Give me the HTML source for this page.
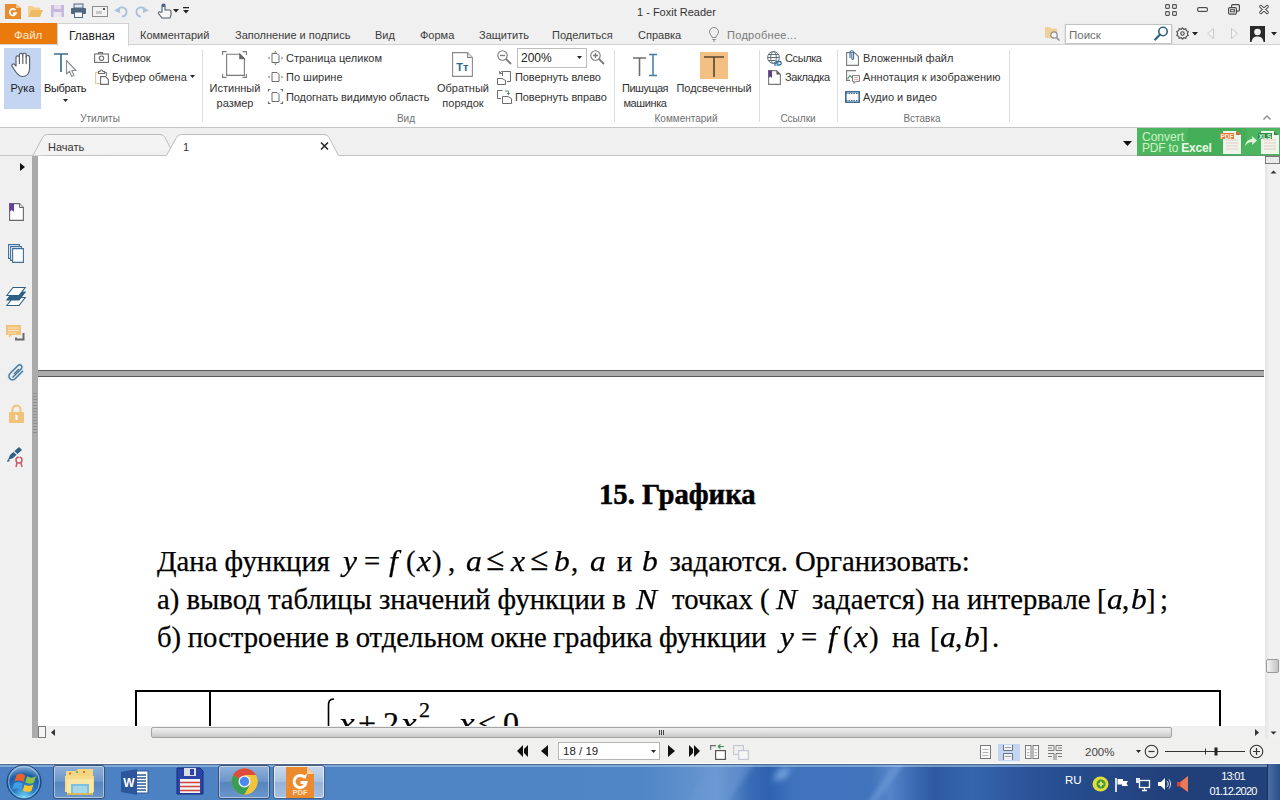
<!DOCTYPE html>
<html lang="ru"><head><meta charset="utf-8"><title>1 - Foxit Reader</title>
<style>
*{box-sizing:border-box;margin:0;padding:0}
html,body{width:1280px;height:800px;overflow:hidden;background:#fff}
body{font-family:"Liberation Sans","DejaVu Sans",sans-serif;font-size:11px;color:#333;position:relative}
.abs{position:absolute}
.t{position:absolute;white-space:nowrap;line-height:14px;height:14px}
.c{text-align:center}
svg{position:absolute;overflow:visible}
#titlebar{left:0;top:0;width:1280px;height:45px;background:#f0f0f0}
#ribbon{left:0;top:44px;width:1280px;height:84px;background:#fff;border-top:1px solid #d2d2d2;border-bottom:1px solid #c6c6c6}
.sep{position:absolute;top:5px;width:1px;height:72px;background:#dcdcdc}
.grp{color:#707070;font-size:10px}
#tabstrip{left:0;top:128px;width:1280px;height:29px;background:#f0f0f0}
#nav{left:0;top:157px;width:32px;height:581px;background:#f0f0f0}
#navsep{left:32px;top:157px;width:6px;height:581px;background:#ababab}
#doc{left:38px;top:157px;width:1226px;height:570px;background:#fff;overflow:hidden}
#vscroll{left:1264px;top:157px;width:16px;height:570px;background:#f0f0f0}
#hscroll{left:38px;top:726px;width:1242px;height:12px;background:#f0f0f0}
#status{left:0;top:738px;width:1280px;height:24px;background:#f0f0f0}
#taskbar{left:0;top:762px;width:1280px;height:38px;background:#2d63a8}
.doc{font-family:"Liberation Serif","DejaVu Serif",serif;color:#000}
.d{position:absolute;white-space:nowrap;font-size:28.700px;line-height:40px;height:40px;-webkit-text-stroke:.250px #000}
.i{font-style:italic;transform:scaleX(1.1);transform-origin:0 50%}
.le{font-size:33px;margin-top:-1.500px}
.l1{top:383.500px}.l2{top:421.500px}.l3{top:459.500px}
</style></head><body>
<div id="titlebar" class="abs">
<!-- quick access -->
<svg style="left:5px;top:4px" width="16" height="15" viewBox="0 0 16 15"><path d="M0 0H11L16 4V15H0Z" fill="#e98a2c"/><path d="M11 0V4H16Z" fill="#f6c58e"/><path d="M10.5 6.2A3.2 3.2 0 1 0 11 9.2H8" fill="none" stroke="#fff" stroke-width="1.8"/></svg>
<svg style="left:28px;top:5px" width="15" height="12" viewBox="0 0 15 12"><path d="M0 1H5L6 2.5H12V5H3L0 11Z" fill="#f3d08e"/><path d="M3 5H15L12 12H0Z" fill="#eeba63"/></svg>
<svg style="left:51px;top:5px" width="13" height="12" viewBox="0 0 13 12"><path d="M0 0H13V12H0Z" fill="#c9b8dd"/><rect x="3" y="0" width="7" height="4" fill="#e6dcef"/><rect x="2.5" y="7" width="8" height="5" fill="#ece5f3"/></svg>
<svg style="left:71px;top:4px" width="15" height="14" viewBox="0 0 15 14"><rect x="3" y="0" width="9" height="4" fill="#dfe6ee" stroke="#50677f"/><rect x="0" y="4" width="15" height="6" rx="1" fill="#50677f"/><rect x="3.5" y="8" width="8" height="5.5" fill="#f4f6f8" stroke="#50677f"/></svg>
<svg style="left:92px;top:6px" width="16" height="11" viewBox="0 0 16 11"><rect x=".5" y=".5" width="15" height="10" fill="#f3f3f3" stroke="#8d8d8d"/><rect x="4" y="5" width="6" height="3" fill="#c8c8c8"/><rect x="11" y="2" width="2" height="2" fill="#555"/></svg>
<svg style="left:114px;top:5px" width="14" height="12" viewBox="0 0 14 12"><path d="M4 5A4.5 4.5 0 1 1 8 11.5" fill="none" stroke="#a9c1dc" stroke-width="1.8"/><path d="M0 5.5L6 2V8Z" fill="#a9c1dc"/></svg>
<svg style="left:135px;top:5px" width="14" height="12" viewBox="0 0 14 12"><path d="M10 5A4.5 4.5 0 1 0 6 11.5" fill="none" stroke="#a9c1dc" stroke-width="1.8"/><path d="M14 5.5L8 2V8Z" fill="#a9c1dc"/></svg>
<svg style="left:157px;top:3px" width="15" height="16" viewBox="0 0 15 16"><path d="M5 9V2.5A1.5 1.5 0 0 1 8 2.5V7H12.5A1.5 1.5 0 0 1 14 8.5V12L13 15H5L1.5 10.5A1.2 1.2 0 0 1 3.5 9.2Z" fill="#f7f7f7" stroke="#4f5d6b" stroke-width="1.1"/><circle cx="6.5" cy="2.5" r="1.6" fill="#39618e"/></svg>
<svg style="left:173px;top:9px" width="6" height="4" viewBox="0 0 6 4"><path d="M0 0H6L3 3.5Z" fill="#222"/></svg>
<svg style="left:183px;top:7px" width="6" height="8" viewBox="0 0 6 8"><rect x="0" y="0" width="6" height="1.3" fill="#222"/><path d="M0 3H6L3 6.5Z" fill="#222"/></svg>
<div class="t" style="left:637px;top:5px;font-size:11px;color:#333">1 - Foxit Reader</div>
<!-- window controls -->
<svg style="left:1165px;top:3.500px" width="12" height="12" viewBox="0 0 12 12" fill="none" stroke="#555" stroke-width="1.100"><rect x=".600" y=".600" width="3.800" height="3.800" rx=".800"/><rect x="7.600" y=".600" width="3.800" height="3.800" rx=".800"/><rect x=".600" y="7.600" width="3.800" height="3.800" rx=".800"/><rect x="7.600" y="7.600" width="3.800" height="3.800" rx=".800"/></svg>
<svg style="left:1197px;top:7px" width="11" height="5" viewBox="0 0 11 5"><rect x=".6" y=".6" width="9.8" height="3.8" rx="1.5" fill="#fff" stroke="#4a4a4a" stroke-width="1.2"/></svg>
<svg style="left:1228px;top:4px" width="12" height="11" viewBox="0 0 12 11" fill="#efefef" stroke="#4a4a4a" stroke-width="1.2"><rect x="3.6" y=".6" width="7.8" height="6.5" rx="1.2"/><rect x=".6" y="3.6" width="7.8" height="6.5" rx="1.2"/><rect x="2.6" y="5.6" width="3.8" height="2.2" stroke-width="1"/></svg>
<svg style="left:1259px;top:5px" width="10" height="9" viewBox="0 0 10 9" fill="none" stroke-linecap="round"><path d="M1.800 1.500L8.200 7.500M8.200 1.500L1.800 7.500" stroke="#4a4a4a" stroke-width="3.200"/><path d="M1.800 1.500L8.200 7.500M8.200 1.500L1.800 7.500" stroke="#fff" stroke-width="1.200"/></svg>
<!-- menu tabs -->
<div class="abs" style="left:0;top:23px;width:57px;height:21px;background:#ea7a0c"></div>
<div class="t" style="left:14px;top:28px;color:#fbe3c4;font-size:11.5px;text-shadow:0 0 1px #fff3">Файл</div>
<div class="abs" style="left:57px;top:23px;width:72px;height:23px;background:#fff;border:1px solid #d2d2d2;border-bottom:none;z-index:3"></div>
<div class="t" style="left:69px;top:29px;font-size:12px;color:#222;z-index:4">Главная</div>
<div class="t" style="left:140px;top:28px;color:#3c3c3c">Комментарий</div>
<div class="t" style="left:235px;top:28px;color:#3c3c3c">Заполнение и подпись</div>
<div class="t" style="left:375px;top:28px;color:#3c3c3c">Вид</div>
<div class="t" style="left:420px;top:28px;color:#3c3c3c">Форма</div>
<div class="t" style="left:479px;top:28px;color:#3c3c3c">Защитить</div>
<div class="t" style="left:552px;top:28px;color:#3c3c3c">Поделиться</div>
<div class="t" style="left:638px;top:28px;color:#3c3c3c">Справка</div>
<svg style="left:708px;top:27px" width="12" height="15" viewBox="0 0 12 15" fill="none" stroke="#8a8a8a" stroke-width="1"><path d="M4 10.5C4 8.5 1.5 7.5 1.5 5A4.5 4.5 0 0 1 10.500 5C10.500 7.5 8 8.500 8 10.500Z"/><path d="M4.300 12.500H7.700M5 14H7"/></svg>
<div class="t" style="left:727px;top:28px;letter-spacing:.300px;color:#7a7a7a">Подробнее...</div>
<!-- search area -->
<svg style="left:1045px;top:26px" width="16" height="15" viewBox="0 0 16 15"><path d="M0 1H5L6 2.500H12V12H0Z" fill="#f1cf9b"/><circle cx="9" cy="9" r="3.200" fill="#f4f4f4" stroke="#8a8a8a" stroke-width="1.200"/><path d="M11.500 11.500L14.500 14.500" stroke="#8a8a8a" stroke-width="1.500"/></svg>
<div class="abs" style="left:1065px;top:24px;width:107px;height:20px;background:#fff;border:1px solid #c4c4c4;box-shadow:0 1px 2px #ccc"></div>
<div class="t" style="left:1069px;top:28px;color:#6e6e6e;font-size:11.500px">Поиск</div>
<svg style="left:1154px;top:26px" width="15" height="15" viewBox="0 0 15 15" fill="none"><circle cx="9" cy="5.500" r="4.200" stroke="#2f6383" stroke-width="1.600"/><path d="M6 8.500L1.200 13.500" stroke="#2f6383" stroke-width="2.200" stroke-linecap="round"/></svg>
<svg style="left:1176px;top:27px" width="13" height="13" viewBox="0 0 13 13" fill="none" stroke="#4a4a4a" stroke-width="1.100"><circle cx="6.500" cy="6.500" r="1.700"/><path d="M6.500 .800L7.800 2.300L9.800 1.700L10.300 3.700L12.200 4.500L11.300 6.500L12.200 8.500L10.300 9.300L9.800 11.300L7.800 10.700L6.500 12.200L5.200 10.700L3.200 11.300L2.700 9.300L.800 8.500L1.700 6.500L.800 4.500L2.700 3.700L3.200 1.700L5.200 2.300Z"/></svg>
<svg style="left:1192px;top:32px" width="6" height="4" viewBox="0 0 6 4"><path d="M0 0H6L3 3.500Z" fill="#222"/></svg>
<svg style="left:1207px;top:28px" width="7" height="11" viewBox="0 0 7 11"><path d="M6.500 .500V10.500L.700 5.500Z" fill="#f4f4f4" stroke="#c9c9c9"/></svg>
<svg style="left:1231px;top:28px" width="7" height="11" viewBox="0 0 7 11"><path d="M.500 .500V10.500L6.300 5.500Z" fill="#f4f4f4" stroke="#c9c9c9"/></svg>
<svg style="left:1250px;top:26px" width="15" height="16" viewBox="0 0 15 16"><rect width="15" height="16" fill="#2a2a2a"/><circle cx="7.500" cy="6" r="3.300" fill="#f2f2f2"/><path d="M1.500 16C2 11.500 5 10.500 7.500 10.500S13 11.500 13.500 16Z" fill="#f2f2f2"/></svg>
<svg style="left:1271px;top:32px" width="6" height="4" viewBox="0 0 6 4"><path d="M0 0H6L3 3.500Z" fill="#222"/></svg>
</div>
<div id="ribbon" class="abs"></div>
<div id="rc" class="abs" style="left:0;top:0;width:1280px;height:128px">
<div class="abs" style="left:4px;top:48px;width:37px;height:61px;background:#c3d5f1"></div>
<!-- hand -->
<svg style="left:11px;top:52px" width="22" height="26" viewBox="0 0 22 26" fill="#fff" stroke="#5a6470" stroke-width="1.2" stroke-linejoin="round"><path d="M5 14V5.500A1.700 1.700 0 0 1 8.400 5.500V3A1.700 1.700 0 0 1 11.800 3V2.700A1.700 1.700 0 0 1 15.200 3.200V5A1.700 1.700 0 0 1 18.600 5.500V16C18.600 21 16 24.500 11.500 24.500C8 24.500 6.500 22.500 4.500 19.500L1 14.200A1.600 1.600 0 0 1 3.600 12.400Z"/><path d="M8.400 5.500V12M11.800 3V12M15.200 4V12" fill="none"/></svg>
<div class="t c" style="left:4px;top:81px;width:37px;color:#222">Рука</div>
<!-- select -->
<svg style="left:54px;top:53px" width="23" height="25" viewBox="0 0 23 25"><path d="M0 1H14M7 1V19" fill="none" stroke="#3d6f8f" stroke-width="1.700"/><path d="M12.500 7.500V21L15.500 18.200L17.700 23.500L20 22.500L17.800 17.500H22Z" fill="#fbfbfb" stroke="#8a8f96" stroke-width="1.100" stroke-linejoin="round"/></svg>
<div class="t c" style="left:41px;top:81px;width:48px;color:#222;letter-spacing:-.300px">Выбрать</div>
<svg style="left:63px;top:98.500px" width="5" height="3" viewBox="0 0 5 3"><path d="M0 0H5L2.500 3Z" fill="#222"/></svg>
<!-- snapshot -->
<svg style="left:94px;top:52px" width="15" height="11" viewBox="0 0 15 11" fill="none" stroke="#6d6d6d" stroke-width="1.100"><path d="M4.500 2V.600H8.500V2"/><rect x=".600" y="2" width="13.800" height="8.400"/><circle cx="7.500" cy="6.200" r="2.200"/></svg>
<div class="t" style="left:112px;top:51px">Снимок</div>
<!-- clipboard -->
<svg style="left:95px;top:70px" width="14" height="15" viewBox="0 0 14 15" fill="none"><path d="M3.500 2.500H.600V13.500H5" stroke="#e8c79a" stroke-width="1.200"/><path d="M9.500 2.500H11.400V6" stroke="#8a8a8a" stroke-width="1.200"/><path d="M3.500 3.500V1.500H5A1.500 1.500 0 0 1 8 1.500H9.500V3.500Z" stroke="#6d6d6d" stroke-width="1.100"/><path d="M5.600 6.600H10.500L13.400 9.500V14.400H5.600Z" fill="#fff" stroke="#6d6d6d" stroke-width="1.100"/></svg>
<div class="t" style="left:112px;top:70px">Буфер обмена</div>
<svg style="left:190px;top:75px" width="5" height="3" viewBox="0 0 5 3"><path d="M0 0H5L2.500 3Z" fill="#222"/></svg>
<div class="t c grp" style="left:60px;top:112px;width:80px">Утилиты</div>
<div class="sep" style="left:202px;top:50px"></div>
<!-- actual size -->
<svg style="left:222px;top:51px" width="25" height="27" viewBox="0 0 25 27" fill="none" stroke="#7a7a7a" stroke-width="1.100"><path d="M.600 4V.600H4.500M20.500 .600H24.400V4M24.400 23V26.400H20.500M4.500 26.400H.600V23"/><path d="M4.600 3.200H17.800L22.400 7.800V24.400H4.600Z" fill="#fff"/><path d="M17.800 3.200V7.800H22.400Z" fill="#666" stroke="#666"/></svg>
<div class="t c" style="left:205px;top:81px;width:60px">Истинный</div>
<div class="t c" style="left:205px;top:96px;width:60px">размер</div>
<!-- fit page -->
<svg style="left:268px;top:51px" width="15" height="14" viewBox="0 0 15 14" fill="none" stroke="#6d6d6d"><path d="M4 2.500H9L11 4.500V11.500H4Z" fill="#fff"/><path d="M7.500 0L6 1.500H9ZM7.500 14L6 12.500H9ZM0 7L1.500 5.500V8.500ZM15 7L13.500 5.500V8.500Z" fill="#6d6d6d" stroke="none"/></svg>
<div class="t" style="left:286px;top:51px">Страница целиком</div>
<!-- fit width -->
<svg style="left:268px;top:70px" width="15" height="14" viewBox="0 0 15 14" fill="none" stroke="#6d6d6d"><path d="M4 2.500H9L11 4.500V11.500H4Z" fill="#fff"/><path d="M0 7L1.500 5.500V8.500ZM15 7L13.500 5.500V8.500Z" fill="#6d6d6d" stroke="none"/></svg>
<div class="t" style="left:286px;top:70px">По ширине</div>
<!-- fit visible -->
<svg style="left:268px;top:89px" width="15" height="15" viewBox="0 0 15 15" fill="none" stroke="#6d6d6d"><path d="M4 3.500H9L11 5.500V12.500H4Z" fill="#fff"/><path d="M.500 2.500V.500H2.500M12.500 .500H14.500V2.500M14.500 12.500V14.500H12.500M2.500 14.500H.500V12.500" stroke-width="1.200"/></svg>
<div class="t" style="left:286px;top:90px;letter-spacing:-.100px">Подогнать видимую область</div>
<div class="t c grp" style="left:376px;top:112px;width:60px">Вид</div>
<!-- reverse order -->
<svg style="left:452px;top:52px" width="21" height="25" viewBox="0 0 21 25"><path d="M.600 .600H15.500L20.400 5.500V24.400H.600Z" fill="#fff" stroke="#8a8a8a" stroke-width="1.100"/><path d="M15.500 .600V5.500H20.400" fill="#ddd" stroke="#8a8a8a" stroke-width="1.100"/><text x="10.300" y="19" text-anchor="middle" font-family="Liberation Sans, sans-serif" font-size="11" font-weight="bold" fill="#2e6a8e">Tт</text></svg>
<div class="t c" style="left:433px;top:81px;width:60px">Обратный</div>
<div class="t c" style="left:433px;top:96px;width:60px">порядок</div>
<!-- zoom out -->
<svg style="left:497px;top:50px" width="15" height="15" viewBox="0 0 15 15" fill="none" stroke="#7a7a7a"><circle cx="5.500" cy="5.500" r="4.700" stroke-width="1.100"/><path d="M3 5.500H8" stroke-width="1.300"/><path d="M9 9L14 14" stroke-width="1.800"/></svg>
<div class="abs" style="left:517px;top:48px;width:70px;height:20px;background:#fff;border:1px solid #bdbdbd"></div>
<div class="t" style="left:521px;top:51px;font-size:12px;color:#222">200%</div>
<svg style="left:577px;top:56px" width="5" height="3" viewBox="0 0 5 3"><path d="M0 0H5L2.500 3Z" fill="#222"/></svg>
<!-- zoom in -->
<svg style="left:590px;top:50px" width="15" height="15" viewBox="0 0 15 15" fill="none" stroke="#7a7a7a"><circle cx="5.500" cy="5.500" r="4.700" stroke-width="1.100"/><path d="M3 5.500H8M5.500 3V8" stroke-width="1.300"/><path d="M9 9L14 14" stroke-width="1.800"/></svg>
<!-- rotate left -->
<svg style="left:497px;top:70px" width="15" height="15" viewBox="0 0 15 15" fill="none" stroke="#6d6d6d"><path d="M5.500 6V1.500H13.500V11.500H10"/><path d="M.500 8.500H5L8.500 10.500V14.500H.500Z" fill="#fff"/><path d="M5 1L2.500 3.500M2.500 3.500V1M2.500 3.500H5" stroke-width=".900"/></svg>
<div class="t" style="left:515px;top:70px;letter-spacing:-.100px">Повернуть влево</div>
<!-- rotate right -->
<svg style="left:497px;top:89px" width="15" height="15" viewBox="0 0 15 15" fill="none" stroke="#6d6d6d"><path d="M5.500 1.500H.500V9.500H4"/><path d="M5.500 7.500H11L14.500 9.500V14.500H5.500Z" fill="#fff"/><path d="M8 2H11.500V5.500M11.500 5.500L10 4M11.500 5.500L13 4" stroke="#3f8a5a" stroke-width=".900"/></svg>
<div class="t" style="left:515px;top:90px;letter-spacing:-.100px">Повернуть вправо</div>
<div class="sep" style="left:614px;top:50px"></div>
<!-- typewriter -->
<svg style="left:633px;top:53px" width="25" height="24" viewBox="0 0 25 24" fill="none"><path d="M0 5H13M6.500 5V23" stroke="#6d6d6d" stroke-width="1.600"/><path d="M16 1.500H24M20 1.500V22.500M16 22.500H24" stroke="#3d7ba6" stroke-width="1.500"/></svg>
<div class="t c" style="left:615px;top:81px;width:60px;letter-spacing:-.500px">Пишущая</div>
<div class="t c" style="left:615px;top:96px;width:60px;letter-spacing:-.400px">машинка</div>
<!-- highlight -->
<div class="abs" style="left:700px;top:52px;width:28px;height:27px;background:#f3c083"></div>
<svg style="left:704px;top:56px" width="20" height="21" viewBox="0 0 20 21" fill="none"><path d="M0 1H20M10 1V21" stroke="#5a4632" stroke-width="1.600"/></svg>
<div class="t c" style="left:673px;top:81px;width:82px">Подсвеченный</div>
<div class="t c grp" style="left:646px;top:112px;width:80px">Комментарий</div>
<div class="sep" style="left:759px;top:50px"></div>
<!-- link -->
<svg style="left:767px;top:51px" width="15" height="15" viewBox="0 0 15 15" fill="none" stroke="#5d6b7a"><circle cx="6.500" cy="6.500" r="5.900" /><ellipse cx="6.500" cy="6.500" rx="2.800" ry="5.900"/><path d="M.600 6.500H12.400M1.500 3.500H11.500M1.500 9.500H8"/><path d="M9 10.500H12.500A1.700 1.700 0 0 1 12.500 14H9.500M11.500 12.200H8.500A1.700 1.700 0 0 0 8.500 14.800" stroke="#2f6fa3" stroke-width="1.300"/></svg>
<div class="t" style="left:785px;top:51px;letter-spacing:-.400px">Ссылка</div>
<!-- bookmark -->
<svg style="left:768px;top:70px" width="13" height="15" viewBox="0 0 13 15"><path d="M.600 .600H8.500L12.400 4.500V14.400H.600Z" fill="#fff" stroke="#7a7a7a" stroke-width="1.100"/><path d="M8.500 .600V4.500H12.400Z" fill="#555"/><path d="M.500 .500H4V8L2.200 6.500L.500 8Z" fill="#5b3d86"/></svg>
<div class="t" style="left:785px;top:70px;letter-spacing:-.400px">Закладка</div>
<div class="t c grp" style="left:768px;top:112px;width:60px">Ссылки</div>
<div class="sep" style="left:837px;top:50px"></div>
<!-- attach -->
<svg style="left:846px;top:50px" width="13" height="16" viewBox="0 0 13 16" fill="none"><path d="M.600 2.600H8.500L12.400 6.500V15.400H.600Z" fill="#fff" stroke="#7a7a7a" stroke-width="1.100"/><path d="M4 8V2.500A1.800 1.800 0 0 1 7.600 2.500V8.500A.900 .900 0 0 1 5.800 8.500V3.500" stroke="#3d6f9a" stroke-width="1.100"/></svg>
<div class="t" style="left:863px;top:51px">Вложенный файл</div>
<!-- image annot -->
<svg style="left:846px;top:70px" width="14" height="15" viewBox="0 0 14 15" fill="none"><path d="M10 .600H.600V10.400H4" stroke="#7a7a7a" stroke-width="1.100"/><path d="M1.500 9L4 5.500L6 8" stroke="#4f9a67" stroke-width="1.200"/><path d="M6.500 5.600H13.400V11.400H9.500L8 13.500V11.400H6.500Z" fill="#fff" stroke="#7a7a7a" stroke-width="1"/><path d="M8 7.500H12M8 9.500H12" stroke="#d59a9a" stroke-width=".800"/></svg>
<div class="t" style="left:863px;top:70px;letter-spacing:.100px">Аннотация к изображению</div>
<!-- audio video -->
<svg style="left:845px;top:91px" width="15" height="12" viewBox="0 0 15 12"><rect x=".800" y=".800" width="13.400" height="10.400" fill="#fff" stroke="#3f6d95" stroke-width="1.600"/><path d="M1 2.500H14M1 9.500H14" stroke="#3f6d95" stroke-width="1" stroke-dasharray="1.500 1"/></svg>
<div class="t" style="left:863px;top:90px">Аудио и видео</div>
<div class="t c grp" style="left:892px;top:112px;width:60px">Вставка</div>
<div class="sep" style="left:1009px;top:50px"></div>
<svg style="left:1263px;top:115px" width="8" height="5" viewBox="0 0 8 5"><path d="M.500 4.500L4 1L7.500 4.500" fill="none" stroke="#8a8a8a" stroke-width="1.300"/></svg>
</div>
<div id="tabstrip" class="abs"></div>
<svg style="left:0;top:128px" width="1280" height="29" viewBox="0 0 1280 29">
<path d="M0 27.500H1280" stroke="#c3c3c3" stroke-width="1"/>
<path d="M33 27.500L42.500 9.500Q44 6.500 47.500 6.500H160Q163.500 6.500 165 9.500L172 23" fill="#f3f3f3" stroke="#bdbdbd" stroke-width="1"/>
<path d="M166.500 27.500L176.500 9.500Q178 6.500 181.500 6.500H324Q327.500 6.500 329 9.500L338.500 27.500V29H166.500Z" fill="#fff" stroke="none"/>
<path d="M166.500 27.500L176.500 9.500Q178 6.500 181.500 6.500H324Q327.500 6.500 329 9.500L338.500 27.500" fill="none" stroke="#bdbdbd" stroke-width="1"/>
<path d="M321 14.500L328 21.500M328 14.500L321 21.500" stroke="#222" stroke-width="1.500"/>
<path d="M1123 13H1132L1127.500 18Z" fill="#111"/>
</svg>
<div class="t" style="left:48px;top:140px;font-size:11px;color:#333">Начать</div>
<div class="t" style="left:183px;top:140px;font-size:11px;color:#333">1</div>
<!-- banner -->
<div class="abs" style="left:1137px;top:128px;width:143px;height:28px;background:#4db560;overflow:hidden;border-bottom:1px solid #5f9a6b">
<div class="abs" style="left:50px;top:-18px;width:60px;height:50px;border-radius:50%;background:#45ae59"></div>
<div class="t" style="left:5px;top:3px;font-size:12px;line-height:12px;color:#c9f5c4">Convert</div>
<div class="t" style="left:5px;top:14px;font-size:12px;line-height:12px;color:#c9f5c4;letter-spacing:-.2px">PDF to <b style="color:#eafce8">Excel</b></div>
<svg style="left:82px;top:1px" width="61" height="27" viewBox="0 0 61 27">
<path d="M4 2H17L22 6V25H4Z" fill="#eef5ea"/><path d="M17 2V6H22Z" fill="#d9623a"/>
<path d="M7 11H19M7 14H19M7 17H19M7 20H19" stroke="#e9c9c9" stroke-width="1"/>
<rect x="1" y="4" width="14" height="6" fill="#e07b3e"/>
<text x="8" y="9.500" text-anchor="middle" font-family="Liberation Sans, sans-serif" font-size="6.500" font-weight="bold" fill="#fbe9dd">PDF</text>
<path d="M26 17C27 12 30 10 33 10V7L38 11.500L33 16V13C30 13 28 14.500 26 17Z" fill="#d8f3d6"/>
<path d="M42 2H55L60 6V25H42Z" fill="#eef5ea"/><path d="M55 2V6H60Z" fill="#2f8a48"/>
<path d="M45 11H57M45 14H57M45 17H57M45 20H57" stroke="#e9c9c9" stroke-width="1"/>
<rect x="39" y="4" width="14" height="6" fill="#2f8a48"/>
<text x="46" y="9.500" text-anchor="middle" font-family="Liberation Sans, sans-serif" font-size="6.500" font-weight="bold" fill="#d6f3d6">XLS</text>
</svg>
</div>
<div id="nav" class="abs"></div>
<div id="navsep" class="abs" style="top:156px;height:582px"></div>
<svg style="left:0;top:157px" width="32" height="330" viewBox="0 0 32 330">
<path d="M20 6V14L25 10Z" fill="#111"/>
<!-- bookmark page -->
<g transform="translate(9,46)"><path d="M.600 .600H10.500L14.400 4.500V17.400H.600Z" fill="#fff" stroke="#6a6a6a" stroke-width="1.100"/><path d="M10.500 .600V4.500H14.400" fill="#ddd" stroke="#6a6a6a" stroke-width="1"/><path d="M.500 .500H5V9L2.800 7L.500 9Z" fill="#6a3f9a"/></g>
<!-- pages -->
<g transform="translate(8,87)" fill="#fff" stroke="#3d6f9a" stroke-width="1.100"><path d="M.600 .600H11.400V14.400H.600Z"/><path d="M2.600 2.600H13.400V16.400H2.600Z"/><path d="M4.600 4.600H15.400V18.400H4.600Z"/></g>
<!-- layers -->
<g transform="translate(6,128)" stroke="#2f5f86" stroke-width="1.100"><path d="M.800 20.500L7 12.500H19.200L13 20.500Z" fill="#fff"/><path d="M.800 15L7 7H19.200L13 15Z" fill="#2f5f86"/><path d="M.800 10.500L7 2.500H19.200L13 10.500Z" fill="#fff"/></g>
<!-- comments -->
<g transform="translate(6,168)"><path d="M0 0H15V10H6L3 13V10H0Z" fill="#f0c27a"/><path d="M2 3H13M2 5.500H13M2 8H10" stroke="#fbe6c6" stroke-width="1"/><path d="M17.500 8V14.500H10V12.500" fill="none" stroke="#6a6a6a" stroke-width="2"/></g>
<!-- clip -->
<g transform="translate(8,206)" fill="none" stroke="#4f7596" stroke-width="1.400"><path d="M4.500 14.500L13.500 5.500A2.300 2.300 0 0 0 10.300 2.300L2 10.600A3.600 3.600 0 0 0 7.100 15.700L15 7.800" stroke="#d7eaf7" stroke-width="3.400"/><path d="M4.500 14.500L13.500 5.500A2.300 2.300 0 0 0 10.300 2.300L2 10.600A3.600 3.600 0 0 0 7.100 15.700L15 7.800"/><path d="M6 11L11 6"/></g>
<!-- lock -->
<g transform="translate(9,248)"><path d="M3.500 8V4.500A4 4 0 0 1 11.500 4.500V8" fill="none" stroke="#f0c27a" stroke-width="2"/><rect x="0" y="7" width="15" height="11" rx="1" fill="#f0c27a"/><rect x="6.500" y="10" width="2" height="5" fill="#fff"/></g>
<!-- sign -->
<g transform="translate(7,290)"><path d="M1 13L3 8L12 0L15 3L6 11Z" fill="#2f5f86"/><path d="M0 15L1 12L3 14Z" fill="#2f5f86"/><circle cx="12" cy="13" r="3" fill="none" stroke="#c45a6a" stroke-width="1.500"/><path d="M10 16L9 20M14 16L15 20" stroke="#c45a6a" stroke-width="1.500"/><path d="M4 2L13 10" stroke="#f0f0f0" stroke-width="1.200"/></g>
</svg>
<svg style="left:33px;top:393px" width="4" height="42" viewBox="0 0 4 42"><path d="M0 0.500H4M0 3.500H4M0 6.500H4M0 9.500H4M0 12.500H4M0 15.500H4M0 18.500H4M0 21.500H4M0 24.500H4M0 27.500H4M0 30.500H4M0 33.500H4M0 36.500H4M0 39.500H4" stroke="#8f8f8f" stroke-width="1"/></svg>
<div class="abs" style="left:38px;top:156px;width:1227px;height:1px;background:#fff"></div>
<div id="doc" class="abs doc" style="height:569px;width:1227px">
<div class="abs" style="left:0;top:213px;width:1226px;height:7px;background:#ababab;border-top:1px solid #5a5a5a;border-bottom:1px solid #5a5a5a"></div>
<div class="d" style="left:561px;top:317px;font-weight:bold;-webkit-text-stroke:.500px #000">15. Графика</div>
<div class="d l1" style="left:119px">Дана функция</div>
<div class="d l1 i" style="left:305px">y</div><div class="d l1" style="left:326px">=</div><div class="d l1 i" style="left:351px">f</div><div class="d l1" style="left:368px">(</div><div class="d l1 i" style="left:379px">x</div><div class="d l1" style="left:394px">)</div><div class="d l1" style="left:410px">,</div>
<div class="d l1 i" style="left:428px">a</div><div class="d l1 le" style="left:448px">≤</div><div class="d l1 i" style="left:473px">x</div><div class="d l1 le" style="left:492px">≤</div><div class="d l1 i" style="left:516px">b</div><div class="d l1" style="left:533px">,</div>
<div class="d l1 i" style="left:552px">a</div><div class="d l1" style="left:579px">и</div><div class="d l1 i" style="left:604px">b</div>
<div class="d l1" style="left:631.500px">задаются. Организовать:</div>
<div class="d l2" style="left:119px">а) вывод таблицы значений функции в</div>
<div class="d l2 i" style="left:598px">N</div>
<div class="d l2" style="left:634px">точках (</div>
<div class="d l2 i" style="left:738px">N</div>
<div class="d l2" style="left:774px">задается) на интервале</div>
<div class="d l2" style="left:1059px">[</div><div class="d l2 i" style="left:1069px">a</div><div class="d l2" style="left:1084px">,</div><div class="d l2 i" style="left:1093px">b</div><div class="d l2" style="left:1108px">]</div><div class="d l2" style="left:1122px">;</div>
<div class="d l3" style="left:119px;word-spacing:-.600px">б) построение в отдельном окне графика функции</div>
<div class="d l3 i" style="left:742px">y</div><div class="d l3" style="left:763px">=</div><div class="d l3 i" style="left:790px">f</div><div class="d l3" style="left:805px">(</div><div class="d l3 i" style="left:816px">x</div><div class="d l3" style="left:831px">)</div>
<div class="d l3" style="left:854px">на</div>
<div class="d l3" style="left:892px">[</div><div class="d l3 i" style="left:902px">a</div><div class="d l3" style="left:917px">,</div><div class="d l3 i" style="left:926px">b</div><div class="d l3" style="left:941px">]</div><div class="d l3" style="left:954px">.</div>
<!-- table -->
<div class="abs" style="left:97px;top:533px;width:1086px;height:60px;border:2px solid #000;border-bottom:none"></div>
<div class="abs" style="left:171px;top:533px;width:2px;height:60px;background:#000"></div>
<svg style="left:284px;top:540px" width="16" height="40" viewBox="0 0 16 40"><path d="M12 2C7 2 6.500 5 6.500 9V40" fill="none" stroke="#000" stroke-width="1.600"/></svg>
<div class="d i" style="left:301px;top:546px;font-size:32px">x</div>
<div class="d" style="left:320px;top:546px;font-size:32px">+</div>
<div class="d" style="left:345px;top:546px;font-size:32px">2</div>
<div class="d i" style="left:363px;top:546px;font-size:32px">x</div>
<div class="d" style="left:381px;top:533px;font-size:22px">2</div>
<div class="d" style="left:398px;top:546px;font-size:32px">,</div>
<div class="d i" style="left:421px;top:546px;font-size:32px">x</div>
<div class="d" style="left:440px;top:546px;font-size:32px">&lt;</div>
<div class="d" style="left:465px;top:546px;font-size:32px">0</div>
</div>
<div id="vscroll" class="abs" style="top:156px;height:582px;left:1265px;width:15px;background:linear-gradient(90deg,#e4e4e4,#f1f1f1 30%,#f1f1f1)"></div>
<div class="abs" style="left:1265px;top:156px;width:15px;height:8px;background:#e9e9e9;border:1px solid #7a7a7a"></div>
<svg style="left:1270px;top:170px" width="7" height="4" viewBox="0 0 7 4"><path d="M.500 3.500L3.500 .500L6.500 3.500Z" fill="#333"/></svg>
<svg style="left:1270px;top:731px" width="7" height="4" viewBox="0 0 7 4"><path d="M.500 .500L3.500 3.500L6.500 .500Z" fill="#333"/></svg>
<div class="abs" style="left:1266px;top:659px;width:13px;height:14px;border:1px solid #9a9a9a;border-radius:2px;background:linear-gradient(90deg,#f4f4f4,#d9d9d9 55%,#c4c4c4)"></div>
<div id="hscroll" class="abs" style="left:38px;width:1227px"></div>
<div class="abs" style="left:38px;top:726px;width:8px;height:12px;background:#f4f4f4;border:1px solid #7a7a7a"></div>
<svg style="left:51px;top:729px" width="4" height="7" viewBox="0 0 4 7"><path d="M4 0L0 3.500L4 7Z" fill="#333"/></svg>
<svg style="left:1255px;top:729px" width="4" height="7" viewBox="0 0 4 7"><path d="M0 0L4 3.500L0 7Z" fill="#333"/></svg>
<div class="abs" style="left:151px;top:727px;width:1021px;height:11px;border:1px solid #a5a5a5;border-radius:2px;background:linear-gradient(180deg,#f0f0f0,#dedede 50%,#c6c6c6)"></div>
<svg style="left:659px;top:730px" width="6" height="5" viewBox="0 0 6 5"><path d="M.500 0V5M2.500 0V5M4.500 0V5" stroke="#444" stroke-width="1"/></svg>
<div id="status" class="abs" style="height:25px;background:#f0f0ef"></div>
<div id="sc" class="abs" style="left:0;top:0;width:1280px;height:0">
<svg style="left:517px;top:745px" width="12" height="12" viewBox="0 0 12 12"><path d="M6 0V12L0 6ZM11 0V12L7 8V4Z" fill="#111"/><rect x="7" y="0" width="0" height="12"/></svg>
<svg style="left:541px;top:745px" width="7" height="12" viewBox="0 0 7 12"><path d="M7 0V12L0 6Z" fill="#111"/></svg>
<div class="abs" style="left:558px;top:742px;width:102px;height:18px;background:#fff;border:1px solid #b5b5b5"></div>
<div class="t" style="left:563px;top:744px;font-size:11.5px;color:#222">18 / 19</div>
<svg style="left:651px;top:750px" width="5" height="3" viewBox="0 0 5 3"><path d="M0 0H5L2.500 3Z" fill="#222"/></svg>
<svg style="left:668px;top:745px" width="7" height="12" viewBox="0 0 7 12"><path d="M0 0V12L7 6Z" fill="#111"/></svg>
<svg style="left:688px;top:745px" width="12" height="12" viewBox="0 0 12 12"><path d="M6 0V12L12 6ZM1 0V12L5 8V4Z" fill="#111"/></svg>
<svg style="left:710px;top:744px" width="16" height="16" viewBox="0 0 16 16" fill="none"><path d="M.600 6V1.600H6" stroke="#6d6d6d" stroke-width="1.200"/><path d="M8 2.500H14M8 2.500L10.500 .500M8 2.500L10.500 4.500" stroke="#3f8a5a" stroke-width="1.100"/><rect x="5.600" y="6.600" width="9.800" height="8.800" fill="#fff" stroke="#555" stroke-width="1.200"/></svg>
<svg style="left:733px;top:744px" width="16" height="16" viewBox="0 0 16 16" fill="none" stroke="#c2c9d2" stroke-width="1.200"><rect x=".600" y="1.600" width="9.800" height="8.800"/><rect x="5.600" y="6.600" width="9.800" height="8.800" fill="#f6f6f6"/></svg>
<!-- view modes -->
<svg style="left:980px;top:745px" width="11" height="14" viewBox="0 0 11 14" fill="none" stroke="#7a7a7a"><rect x=".500" y=".500" width="10" height="13" fill="#fafafa"/><path d="M2.500 4.500H8.500M2.500 7.500H8.500M2.500 10.500H8.500" stroke="#b5b5b5"/></svg>
<div class="abs" style="left:998px;top:744px;width:22px;height:17px;background:#c3d5f1"></div>
<svg style="left:1002px;top:745px" width="12" height="15" viewBox="0 0 12 15" fill="none" stroke="#6d7480"><path d="M1.500 0V5.500H10.500V0M1.500 15V8.500H10.500V15" fill="#eef2f8"/><path d="M3 2.500H9M3 11.500H9" stroke="#9aa3b0"/></svg>
<svg style="left:1025px;top:745px" width="14" height="14" viewBox="0 0 14 14" fill="none" stroke="#7a7a7a"><rect x=".500" y=".500" width="5.500" height="13" fill="#fafafa"/><rect x="8" y=".500" width="5.500" height="13" fill="#fafafa"/><path d="M2 4.500H4.500M2 7.500H4.500M2 10.500H4.500M9.500 4.500H12M9.500 7.500H12M9.500 10.500H12" stroke="#b5b5b5"/></svg>
<svg style="left:1048px;top:745px" width="14" height="15" viewBox="0 0 14 15" fill="none" stroke="#7a7a7a"><path d="M0 .500H6V5.500H0M14 .500H8V5.500H14M0 8.500H6V15M14 8.500H8V15M0 3H4M10 3H14M0 11.500H4M10 11.500H14"/></svg>
<div class="t" style="left:1085px;top:745px;font-size:11.500px;color:#444">200%</div>
<svg style="left:1136px;top:750px" width="5" height="3" viewBox="0 0 5 3"><path d="M0 0H5L2.500 3Z" fill="#222"/></svg>
<svg style="left:1144px;top:744px" width="120" height="15" viewBox="0 0 120 15" fill="none" stroke="#333"><circle cx="7.500" cy="7.500" r="6.300" stroke-width="1.100"/><path d="M4.500 7.500H10.500" stroke-width="1.200"/><path d="M21 7.500H101" stroke-width="1"/><path d="M61.500 4.500V10.500" stroke-width="1"/><rect x="70.500" y="3.500" width="3" height="8" fill="#222" stroke="none"/><circle cx="112.500" cy="7.500" r="6.300" stroke-width="1.100"/><path d="M109 7.500H116M112.500 4V11" stroke-width="1.200"/></svg>
</div>
<div class="abs" style="left:0;top:763px;width:1280px;height:1px;background:#fcfcfc"></div>
<div id="taskbar" class="abs" style="top:764px;height:36px;overflow:hidden;background:linear-gradient(90deg,#4a80c2 0%,#4f84c4 26%,#5086c6 50%,#5f91cd 54%,#6b9ad3 56%,#3a6cb6 58.500%,#2f62ae 60%,#4073bd 62%,#4174bd 68%,#5585c8 69.500%,#3a69b2 71.500%,#2d5aa3 73%,#3466ae 76%,#2c5499 80%,#264c8e 84%,#213f78 92%,#21427c 100%)">
<div class="abs" style="left:700px;top:-10px;width:40px;height:60px;background:#6b9ad3;transform:skewX(-35deg);opacity:.55;filter:blur(3px)"></div>
<div class="abs" style="left:776px;top:4px;width:12px;height:12px;background:#8fbcee;transform:skewX(-25deg);opacity:.6;filter:blur(3px)"></div>
<div class="abs" style="left:880px;top:-10px;width:10px;height:60px;background:#6d9ad6;transform:skewX(-35deg);opacity:.6;filter:blur(2px)"></div>
<div class="abs" style="left:0;top:0;width:1280px;height:1px;background:#4f6a8c"></div>
<div class="abs" style="left:0;top:1px;width:1280px;height:2px;background:rgba(170,200,235,.55)"></div>
</div>
<div id="tc" class="abs" style="left:0;top:0;width:1280px;height:0">
<!-- start orb -->
<svg style="left:6px;top:764px" width="36" height="36" viewBox="0 0 36 36"><defs><radialGradient id="orb" cx=".5" cy=".95" r=".95"><stop offset="0" stop-color="#6fd6f7"/><stop offset=".35" stop-color="#2b7cc4"/><stop offset=".7" stop-color="#1f5ea6"/><stop offset="1" stop-color="#9dbfe0"/></radialGradient></defs><circle cx="18" cy="18" r="17" fill="url(#orb)" stroke="#1c3d66" stroke-width="1"/><circle cx="18" cy="18" r="15.500" fill="none" stroke="#a9d2f3" stroke-width="1" opacity=".7"/>
<g transform="translate(18,18.500) scale(1.250) translate(-16,-18.500)"><path d="M10 12.500C12.500 11 15 11.500 17 13L15.500 18C13.500 16.500 11 16.500 8.500 17.500Z" fill="#e8632c"/><path d="M18.500 13.500C20.500 15 23 15 25.500 13.500L24 18.500C21.500 20 19 19.500 17 18.500Z" fill="#8cc540"/><path d="M8 19C10.500 18 13 18 15 19.500L13.500 24.500C11.500 23 9 23 6.500 24Z" fill="#3f9de0"/><path d="M16.500 20C18.500 21.500 21 21.500 23.500 20L22 25C19.500 26.500 17 26 15 25Z" fill="#f7c52d"/></g></svg>
<!-- explorer -->
<div class="abs" style="left:53px;top:765px;width:52px;height:34px;border:1px solid #3d5273;border-radius:3px;box-shadow:inset 0 0 0 1px rgba(255,255,255,.45);background:linear-gradient(180deg,#8fb1da,#6b95c9 48%,#5684be 52%,#6a96cb)"></div>
<svg style="left:64px;top:767px" width="32" height="30" viewBox="0 0 32 30"><path d="M2 4H12L14 2H29V9H2Z" fill="#f2d680"/><circle cx="6" cy="6.500" r="1" fill="#d94c3d"/><circle cx="13" cy="5" r="1" fill="#5aa845"/><circle cx="20" cy="5" r="1" fill="#d94c3d"/><path d="M1 9H30V25H1Z" fill="#f6dc8a"/><path d="M3 12H29V26H3Z" fill="#f9e7a6"/><path d="M7 17H25V27H7Z" fill="#7fc1dd"/><path d="M9 19H23V27H9Z" fill="#a5d7ea"/><rect x="3" y="26" width="26" height="2" fill="#d8b85a"/></svg>
<!-- word -->
<svg style="left:121px;top:769px" width="28" height="26" viewBox="0 0 28 26"><rect x="12" y="2" width="15" height="22" fill="#fff" stroke="#2b579a" stroke-width="1"/><path d="M14 6H25M14 9H25M14 12H25M14 15H25M14 18H25M14 21H25" stroke="#2b579a" stroke-width="1.500"/><path d="M0 3L16 0V26L0 23Z" fill="#2b579a"/><text x="8" y="18" text-anchor="middle" font-family="Liberation Sans, sans-serif" font-size="12" font-weight="bold" fill="#fff">W</text></svg>
<!-- floppy -->
<svg style="left:176px;top:767px" width="28" height="28" viewBox="0 0 28 28"><path d="M1 1H24L27 4V27H1Z" fill="#2a44a8" stroke="#172a7a" stroke-width="1"/><rect x="8" y="1" width="12" height="8" fill="#d9dde6"/><rect x="14" y="2" width="4" height="6" fill="#2a44a8"/><rect x="4" y="12" width="20" height="14" fill="#f4f4f4"/><path d="M4 15.500H24M4 19.500H24M4 23.500H24" stroke="#c44" stroke-width="1.500"/></svg>
<!-- chrome -->
<div class="abs" style="left:218px;top:765px;width:52px;height:34px;border:1px solid #3d5273;border-radius:3px;box-shadow:inset 0 0 0 1px rgba(255,255,255,.45);background:linear-gradient(180deg,#8fb1da,#6b95c9 48%,#5684be 52%,#6a96cb)"></div>
<svg style="left:231px;top:768px" width="27" height="27" viewBox="0 0 27 27"><circle cx="13.500" cy="13.500" r="13" fill="#e8b730"/><path d="M13.500 13.500L2.200 7A13 13 0 0 1 24.800 7Z" fill="#dd4b3e"/><path d="M13.500 13.500L2.200 7A13 13 0 0 0 13.500 26.500L19 17Z" fill="#3b9d55"/><path d="M13.500 7H24.800A13 13 0 0 1 13.500 26.500L19.200 16.500Z" fill="#f2c43a"/><path d="M13.500 7H24.800A13 13 0 0 0 2.200 7L8 10.500Z" fill="#dd4b3e"/><circle cx="13.500" cy="13.500" r="6" fill="#f4f4f4"/><circle cx="13.500" cy="13.500" r="4.700" fill="#4a8af0"/></svg>
<!-- foxit -->
<div class="abs" style="left:273px;top:765px;width:52px;height:34px;border:1px solid #4a5f80;border-radius:3px;box-shadow:inset 0 0 0 1px rgba(255,255,255,.6);background:linear-gradient(180deg,#c9d9ee,#a9c2e2 48%,#93b2d9 52%,#a8c2e2)"></div>
<svg style="left:286px;top:767px" width="28" height="31" viewBox="0 0 28 31"><path d="M0 0H21L28 7V31H0Z" fill="#ec8a2f"/><path d="M21 0V7H28Z" fill="#f7cfa3"/><path d="M18.500 10.500A6 6 0 1 0 20 15.500H14.500" fill="none" stroke="#fff" stroke-width="3"/><path d="M16 9L21 7L19.500 12Z" fill="#fff"/><text x="14" y="28" text-anchor="middle" font-family="Liberation Sans, sans-serif" font-size="7.500" font-weight="bold" fill="#fde6cf">PDF</text></svg>
<!-- tray -->
<div class="t" style="left:1065px;top:773px;font-size:11.500px;color:#fff">RU</div>
<svg style="left:1092px;top:776px" width="17" height="16" viewBox="0 0 17 16"><ellipse cx="8.500" cy="8" rx="8" ry="7.500" fill="#e2dc3a"/><circle cx="9" cy="8" r="4.500" fill="#3d9a3a"/><path d="M6.500 8H11.500M9 5.500V10.500" stroke="#f4f06a" stroke-width="1.600"/></svg>
<svg style="left:1114px;top:777px" width="15" height="15" viewBox="0 0 15 15"><path d="M2 1V15" stroke="#fff" stroke-width="1.600"/><path d="M3.500 2H9V4H14L12.500 6.500L14 9H8V7.500H3.500Z" fill="#fff"/></svg>
<svg style="left:1136px;top:778px" width="15" height="14" viewBox="0 0 15 14" fill="none" stroke="#fff"><rect x="3.500" y="2.500" width="10" height="7" stroke-width="1.300"/><path d="M6 12.500H11M8.500 9.500V12.500" stroke-width="1.300"/><rect x=".500" y=".500" width="3" height="4" fill="#cfe0f3" stroke-width=".800"/></svg>
<svg style="left:1158px;top:777px" width="13" height="14" viewBox="0 0 13 14"><path d="M0 5H3L7 1V13L3 9H0Z" fill="#fff"/><path d="M9 4C10.500 5.500 10.500 8.500 9 10M11 2.500C13 5 13 9 11 11.500" fill="none" stroke="#e6eefa" stroke-width="1"/></svg>
<svg style="left:1177px;top:776px" width="12" height="16" viewBox="0 0 12 16"><path d="M0 6H3.500L11 0V16L3.500 10.500H0Z" fill="#d5452f"/><path d="M3.500 6L11 0V16L3.500 10.500Z" fill="#e87a5a"/></svg>
<div class="t c" style="left:1203px;top:769px;width:60px;font-size:11px;color:#fff;letter-spacing:-.800px">13:01</div>
<div class="t c" style="left:1203px;top:784px;width:60px;font-size:11px;color:#fff;letter-spacing:-.800px">01.12.2020</div>
<div class="abs" style="left:1267px;top:764px;width:13px;height:36px;border-left:1px solid #16305a;background:linear-gradient(90deg,#4a6fa5,#2b4f87)"></div>
</div>
</body></html>
